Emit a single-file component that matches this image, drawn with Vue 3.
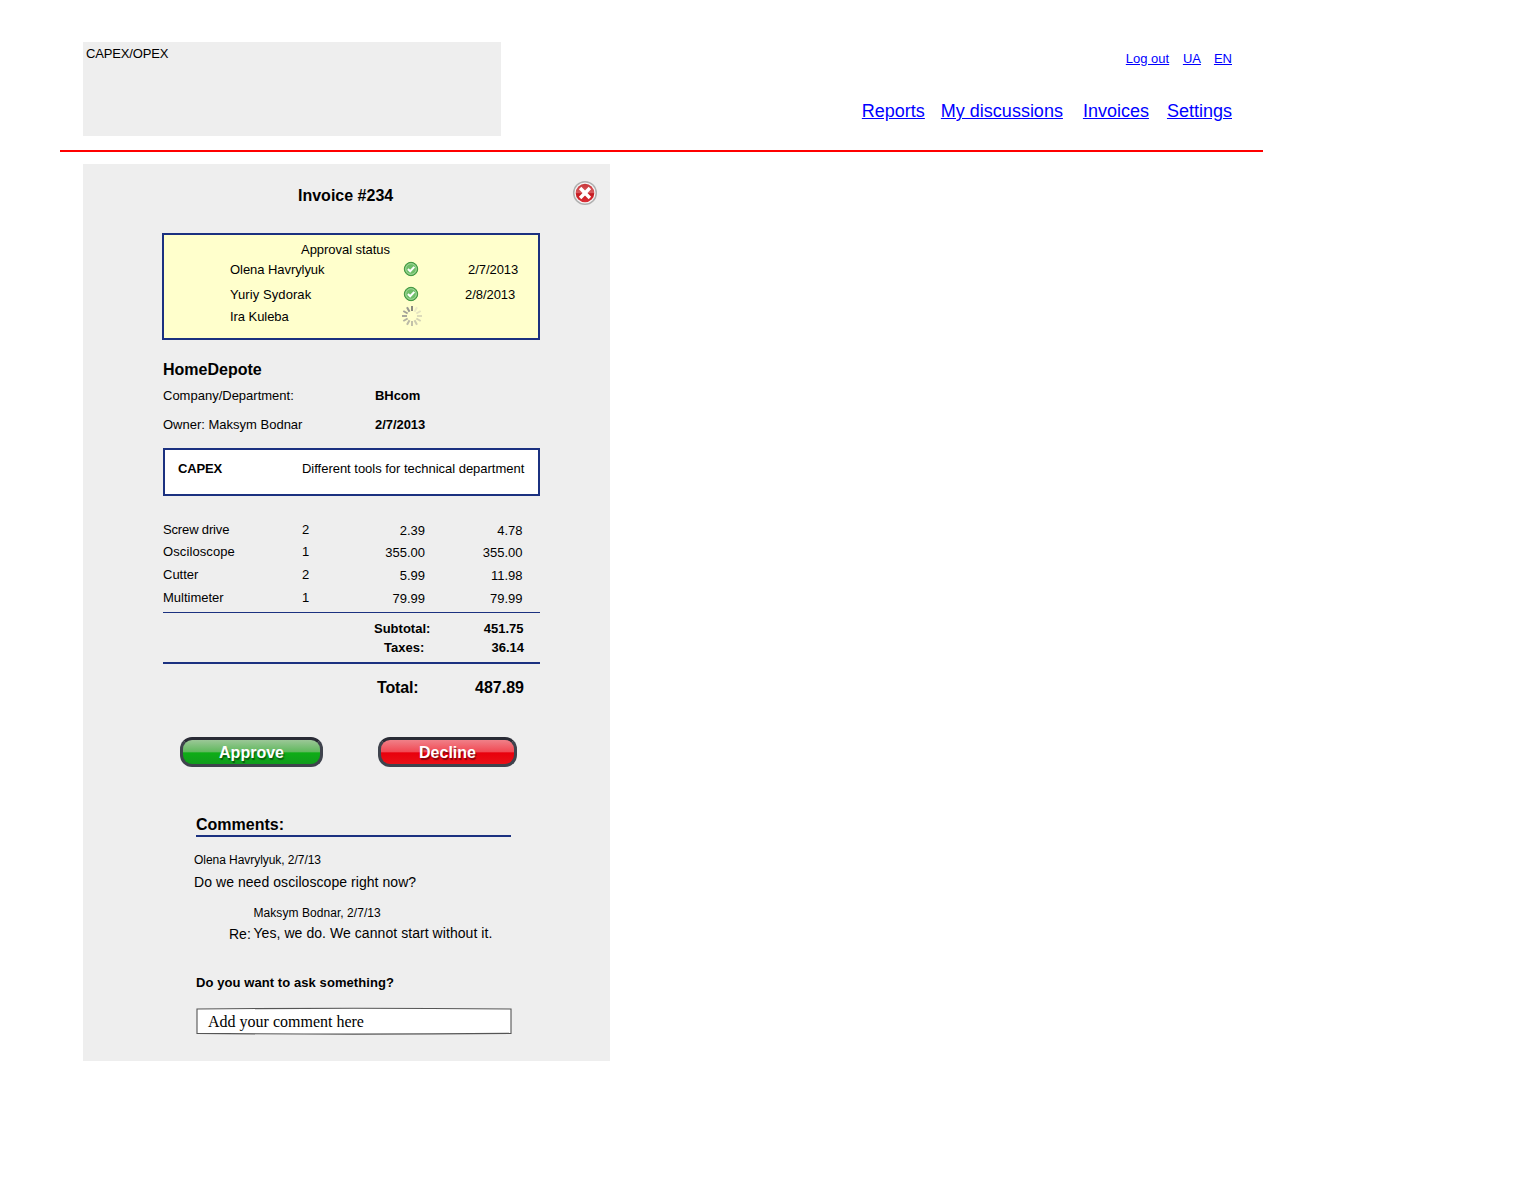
<script setup>
const userLinks = ['Log out', 'UA', 'EN']
const navLinks = ['Reports', 'My discussions', 'Invoices', 'Settings']
const approvals = [
  { name: 'Olena Havrylyuk', date: '2/7/2013', done: true },
  { name: 'Yuriy Sydorak', date: '2/8/2013', done: true },
  { name: 'Ira Kuleba', date: '', done: false },
]
const items = [
  { name: 'Screw drive', qty: 2, price: '2.39', sum: '4.78' },
  { name: 'Osciloscope', qty: 1, price: '355.00', sum: '355.00' },
  { name: 'Cutter', qty: 2, price: '5.99', sum: '11.98' },
  { name: 'Multimeter', qty: 1, price: '79.99', sum: '79.99' },
]
const spokes = ['#8a8a80', '#ecebc6', '#e4e3c0', '#dcdbba', '#d4d3b5', '#cccbb0', '#c2c1aa', '#bab9a6', '#b2b1a0', '#aaa99b', '#a2a196', '#989890']
</script>

<template>
  <div class="page">
    <header class="header">
      <div class="logo">CAPEX/OPEX</div>
      <div class="menus">
        <nav class="user-links">
          <a v-for="l in userLinks" :key="l" href="#">{{ l }}</a>
        </nav>
        <nav class="nav-links">
          <a v-for="l in navLinks" :key="l" href="#">{{ l }}</a>
        </nav>
      </div>
    </header>

    <main class="panel">
      <div class="panel-head">
        <h1>Invoice #234</h1>
        <svg class="close" width="26" height="26" viewBox="0 0 26 26">
          <defs>
            <linearGradient id="red" x1="0" y1="0" x2="0" y2="1">
              <stop offset="0" stop-color="#c8363a" />
              <stop offset=".48" stop-color="#d8585c" />
              <stop offset=".54" stop-color="#c4191f" />
              <stop offset="1" stop-color="#dc3038" />
            </linearGradient>
          </defs>
          <circle cx="13" cy="13" r="11.3" fill="#f6f6f6" stroke="#b0b0b0" stroke-width="1.5" />
          <circle cx="13" cy="13" r="9.3" fill="url(#red)" />
          <path d="M8.1 8.1l9.8 9.8M17.9 8.1l-9.8 9.8" stroke="#fff" stroke-width="3.5" />
        </svg>
      </div>

      <section class="approval">
        <h2>Approval status</h2>
        <div v-for="a in approvals" :key="a.name" class="approval-row">
          <span class="who">{{ a.name }}</span>
          <svg v-if="a.done" class="check" width="16" height="16" viewBox="0 0 16 16">
            <circle cx="8" cy="8" r="6.7" fill="#5fb45c" stroke="#3f9540" stroke-width="1" />
            <circle cx="8" cy="8" r="5.3" fill="#6fbe69" stroke="#a5d99c" stroke-width="1" />
            <path d="M4.9 8l2.3 2.3 4.1-4.4" fill="none" stroke="#fff" stroke-width="2" />
          </svg>
          <svg v-else class="spinner" width="22" height="22" viewBox="-11 -11 22 22">
            <line v-for="(c, i) in spokes" :key="i" y1="-5" y2="-10" :stroke="c" stroke-width="2" :transform="`rotate(${i * 30})`" />
          </svg>
          <span class="when">{{ a.date }}</span>
        </div>
      </section>

      <section class="details">
        <h2>HomeDepote</h2>
        <div class="detail-row"><span>Company/Department:</span><b>BHcom</b></div>
        <div class="detail-row"><span>Owner: Maksym Bodnar</span><b>2/7/2013</b></div>
      </section>

      <section class="purpose">
        <b>CAPEX</b><span>Different tools for technical department</span>
      </section>

      <section class="items">
        <div v-for="i in items" :key="i.name" class="item">
          <span>{{ i.name }}</span>
          <span>{{ i.qty }}</span>
          <span class="num">{{ i.price }}</span>
          <span class="num">{{ i.sum }}</span>
        </div>
      </section>

      <section class="sums">
        <div class="sum-row subtotal"><b>Subtotal:</b><b class="amount">451.75</b></div>
        <div class="sum-row taxes"><b>Taxes:</b><b class="amount">36.14</b></div>
      </section>
      <div class="sum-row total"><b>Total:</b><b class="amount">487.89</b></div>

      <div class="actions">
        <button class="approve">Approve</button>
        <button class="decline">Decline</button>
      </div>

      <section class="comments">
        <h2>Comments:</h2>
        <div class="meta first">Olena Havrylyuk, 2/7/13</div>
        <div class="text">Do we need osciloscope right now?</div>
        <div class="reply">
          <span class="re">Re:</span>
          <div>
            <div class="meta">Maksym Bodnar, 2/7/13</div>
            <div class="text">Yes, we do. We cannot start without it.</div>
          </div>
        </div>
        <h3>Do you want to ask something?</h3>
        <div class="field">
          <svg width="316" height="28" viewBox="0 0 316 28">
            <path d="M1 2Q158 .6 315 2V26.4Q158 27.8 1 26.4Z" fill="#fff" stroke="#555" stroke-width="1.1" />
          </svg>
          <span>Add your comment here</span>
        </div>
      </section>
    </main>
  </div>
</template>

<style>
body { margin: 0; background: #fff; }
</style>

<style scoped>
.page {
  box-sizing: border-box;
  width: 1531px;
  height: 1200px;
  padding: 42px 0 0 60px;
  font: 13px/15px "Liberation Sans", Arial, sans-serif;
  color: #000;
}
h1, h2, h3 { margin: 0; }
.header {
  display: flex;
  justify-content: space-between;
  box-sizing: border-box;
  width: 1203px;
  height: 110px;
  padding: 0 31px 0 23px;
  border-bottom: 2px solid #f00;
}
.logo {
  box-sizing: border-box;
  width: 418px;
  height: 94px;
  padding: 4px 3px;
  background: #eee;
  letter-spacing: -0.15px;
}
.menus a { color: #00f; }
.user-links {
  display: flex;
  justify-content: flex-end;
  gap: 13px;
  margin-top: 9px;
}
.user-links a:first-child { margin-right: 0.7px; }
.nav-links {
  display: flex;
  justify-content: flex-end;
  margin-top: 35px;
  font-size: 18px;
  line-height: 20px;
}
.nav-links a + a { margin-left: 16px; }
.nav-links a:nth-child(3) { margin-left: 20px; }
.nav-links a:nth-child(4) { margin-left: 18px; }
.panel {
  box-sizing: border-box;
  width: 527px;
  height: 897px;
  margin: 12px 0 0 23px;
  padding: 16px 70px 0 80px;
  background: #eee;
}
.panel-head {
  display: flex;
  justify-content: space-between;
  height: 53px;
  margin: 0 -58px 0 135px;
}
h1, h2 { font-size: 16px; line-height: 18px; }
h1 { margin-top: 7px; }
.close { flex: none; }
.approval {
  box-sizing: border-box;
  width: 378px;
  height: 107px;
  margin-left: -1px;
  padding: 7px 0 0 66px;
  border: 2px solid #1b3180;
  background: #ffffcc;
}
.approval h2 {
  margin-left: 71px;
  font-size: 13px;
  line-height: 15px;
  font-weight: 400;
  letter-spacing: -0.04px;
}
.approval-row {
  display: flex;
  align-items: flex-start;
  height: 15px;
  margin-top: 5px;
}
.approval-row:nth-child(3) { margin-top: 10px; }
.approval-row:nth-child(4) { margin-top: 7px; }
.who { width: 173px; letter-spacing: -0.06px; }
.approval-row:nth-child(3) .who { letter-spacing: 0.08px; }
.check { flex: none; margin-top: -1px; }
.spinner { flex: none; margin: -4px -4px 0 -2.5px; }
.when { margin-left: 49px; letter-spacing: -0.05px; }
.approval-row:nth-child(3) .when { margin-left: 46px; }
.details { margin-top: 21px; }
.details h2 { margin-bottom: 9px; }
.detail-row { display: flex; margin-bottom: 14px; }
.detail-row span { width: 212px; }
.detail-row b { letter-spacing: -0.05px; }
.purpose {
  display: flex;
  box-sizing: border-box;
  width: 377px;
  height: 48px;
  margin-top: 16px;
  padding: 11px 0 0 13px;
  border: 2px solid #1b3180;
  background: #fff;
}
.purpose b { width: 124px; letter-spacing: -0.15px; }
.purpose span { letter-spacing: -0.02px; }
.items {
  box-sizing: border-box;
  width: 377px;
  height: 91px;
  margin-top: 26px;
  border-bottom: 1px solid #1b3180;
}
.item {
  display: grid;
  grid-template-columns: 139px 60px 63px 97.5px;
  height: 23px;
}
.item:first-child { height: 22px; }
.item:first-child span:first-child { letter-spacing: -0.15px; }
.item:nth-child(2) span:first-child { letter-spacing: 0.1px; }
.num { padding-top: 1px; text-align: right; }
.sums {
  box-sizing: border-box;
  width: 377px;
  height: 51px;
  padding-top: 8px;
  border-bottom: 2px solid #1b3180;
}
.sum-row {
  display: flex;
  justify-content: space-between;
  box-sizing: border-box;
  width: 361px;
}
.subtotal { width: 360.5px; padding-left: 211px; }
.taxes { padding-left: 221px; margin-top: 4px; }
.total {
  padding-left: 214px;
  margin-top: 15px;
  font-size: 16px;
  line-height: 18px;
}
.total b:first-child { letter-spacing: -0.15px; }
.actions {
  display: flex;
  justify-content: space-between;
  width: 337px;
  height: 30px;
  margin: 40px 0 0 17px;
}
button {
  box-sizing: border-box;
  height: 30px;
  padding: 1px 0 0;
  border: 3px solid #3f434d;
  border-top-color: #292b35;
  border-radius: 12px;
  font: bold 16px/23px "Liberation Sans", Arial, sans-serif;
  color: #fff;
  text-shadow: 1px 2px 1px rgba(0, 0, 0, .45);
}
.approve {
  width: 143px;
  background: linear-gradient(#9bc797, #62b95f 48%, #0ead16 54%, #119c1d);
}
.decline {
  width: 139px;
  background: linear-gradient(#f08088, #f14b55 48%, #e8000c 54%, #e91016);
}
.comments { margin: 49px 0 0 31px; }
.comments h2 {
  width: 315px;
  height: 19px;
  margin-left: 2px;
  border-bottom: 2px solid #1b3180;
}
.meta { margin-top: 16px; font-size: 12px; line-height: 14px; letter-spacing: 0.06px; }
.meta.first { letter-spacing: -0.05px; }
.text { margin-top: 7px; font-size: 14px; line-height: 16px; letter-spacing: 0.06px; }
.reply { display: flex; align-items: flex-end; margin: 0 0 0 35px; }
.re {
  width: 24.5px;
  margin-bottom: -1px;
  font-size: 14px;
  line-height: 16px;
}
.reply .text { margin-top: 5px; white-space: nowrap; }
h3 {
  margin: 34px 0 0 2px;
  font-size: 13px;
  line-height: 15px;
  letter-spacing: 0.08px;
}
.field {
  display: grid;
  width: 316px;
  height: 28px;
  margin: 17px 0 0 2px;
}
.field > * { grid-area: 1 / 1; }
.field span {
  padding: 6px 0 0 12px;
  font: 16px/18px "Liberation Serif", "Times New Roman", serif;
}
</style>
